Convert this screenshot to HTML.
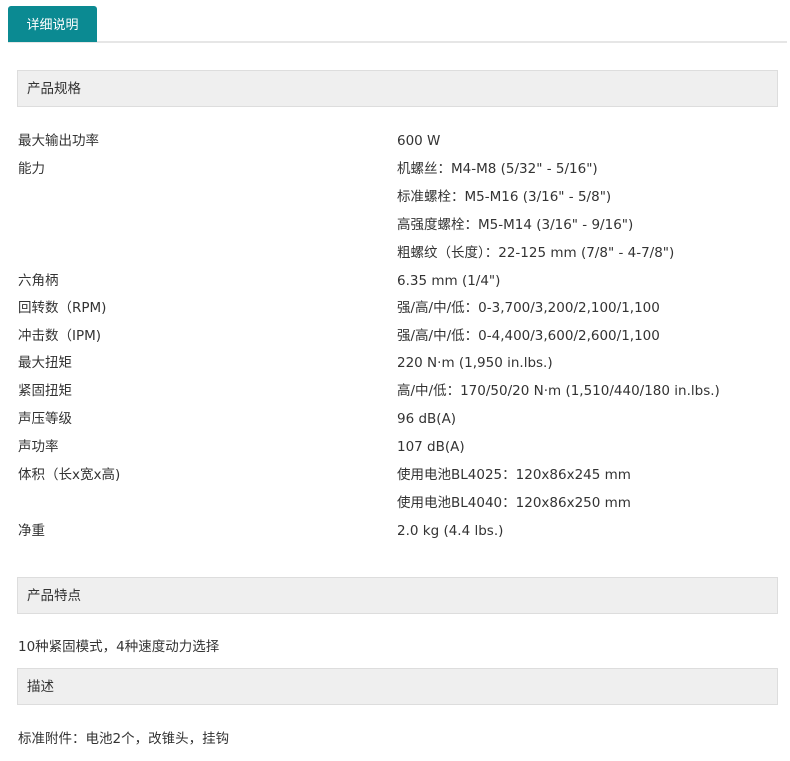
<!DOCTYPE html><html><head><meta charset="utf-8"><style>
body{margin:0;background:#fff;font-family:"DejaVu Sans","Noto Sans CJK SC",sans-serif;font-size:13.5px;color:#333;width:790px;height:761px;position:relative;overflow:hidden}
.tab{position:absolute;left:8px;top:6px;width:89px;height:36px;background:#0b8a92;border-radius:3px 3px 0 0;color:#fff;font-size:13px;line-height:36px;text-align:center;font-family:"Noto Sans CJK SC",sans-serif}
.line{position:absolute;left:8px;right:3px;top:41px;height:2px;background:#e6e6e6}
.box{position:absolute;left:17px;height:35px;background:#efefef;border:1px solid #ddd;line-height:37px;padding-left:9px;width:750px}
.t{position:absolute;line-height:28px;white-space:nowrap;margin-top:1px}
</style></head><body>
<div class="line"></div>
<div class="tab">详细说明</div>
<div class="box" style="top:70px">产品规格</div>
<div class="t" style="left:18px;top:126px">最大输出功率</div><div class="t" style="left:397px;top:126px">600 W</div>
<div class="t" style="left:18px;top:154px">能力</div><div class="t" style="left:397px;top:154px">机螺丝：M4-M8 (5/32" - 5/16")</div>
<div class="t" style="left:397px;top:182px">标准螺栓：M5-M16 (3/16" - 5/8")</div>
<div class="t" style="left:397px;top:210px">高强度螺栓：M5-M14 (3/16" - 9/16")</div>
<div class="t" style="left:397px;top:238px">粗螺纹（长度）：22-125 mm (7/8" - 4-7/8")</div>
<div class="t" style="left:18px;top:266px">六角柄</div><div class="t" style="left:397px;top:266px">6.35 mm (1/4")</div>
<div class="t" style="left:18px;top:293px">回转数（RPM)</div><div class="t" style="left:397px;top:293px">强/高/中/低：0-3,700/3,200/2,100/1,100</div>
<div class="t" style="left:18px;top:321px">冲击数（IPM)</div><div class="t" style="left:397px;top:321px">强/高/中/低：0-4,400/3,600/2,600/1,100</div>
<div class="t" style="left:18px;top:348px">最大扭矩</div><div class="t" style="left:397px;top:348px">220 N·m (1,950 in.lbs.)</div>
<div class="t" style="left:18px;top:376px">紧固扭矩</div><div class="t" style="left:397px;top:376px">高/中/低：170/50/20 N·m (1,510/440/180 in.lbs.)</div>
<div class="t" style="left:18px;top:404px">声压等级</div><div class="t" style="left:397px;top:404px">96 dB(A)</div>
<div class="t" style="left:18px;top:432px">声功率</div><div class="t" style="left:397px;top:432px">107 dB(A)</div>
<div class="t" style="left:18px;top:460px">体积（长x宽x高)</div><div class="t" style="left:397px;top:460px">使用电池BL4025：120x86x245 mm</div>
<div class="t" style="left:397px;top:488px">使用电池BL4040：120x86x250 mm</div>
<div class="t" style="left:18px;top:516px">净重</div><div class="t" style="left:397px;top:516px">2.0 kg (4.4 lbs.)</div>
<div class="box" style="top:577px">产品特点</div>
<div class="t" style="left:18px;top:632px">10种紧固模式，4种速度动力选择</div>
<div class="box" style="top:668px">描述</div>
<div class="t" style="left:18px;top:724px">标准附件：电池2个，改锥头，挂钩</div>
</body></html>
